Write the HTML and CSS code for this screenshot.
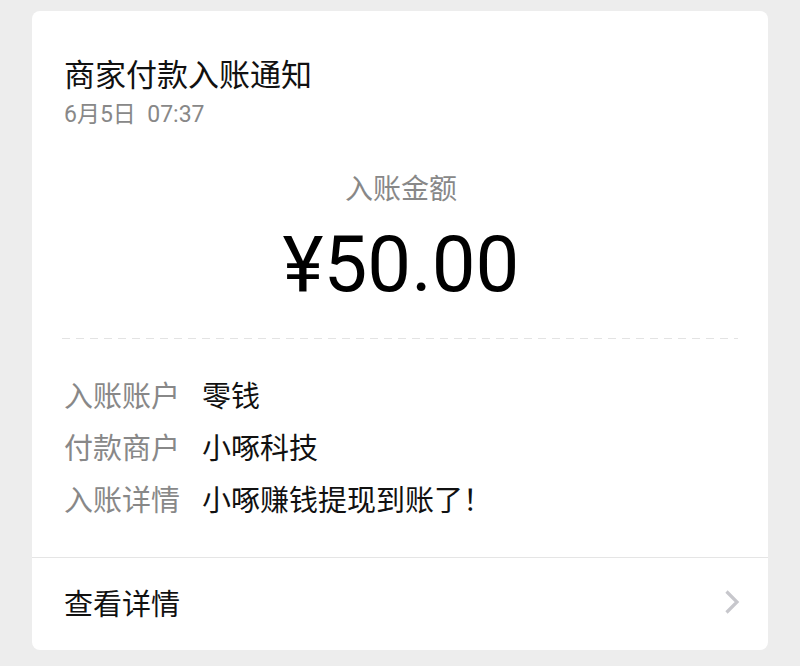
FILE: index.html
```html
<!DOCTYPE html>
<html lang="zh-CN">
<head>
<meta charset="utf-8">
<link rel="stylesheet" href="styles.css">
</head>
<body>
<div class="card">
  <div class="main">
    <div class="title">商家付款入账通知</div>
    <div class="date">6月5日&nbsp;&nbsp;07:37</div>
    <div class="amount-label">入账金额</div>
    <div class="amount">¥50.00</div>
    <div class="dash"></div>
    <div class="rows">
      <div class="row"><span class="label">入账账户</span><span class="value">零钱</span></div>
      <div class="row"><span class="label">付款商户</span><span class="value">小啄科技</span></div>
      <div class="row"><span class="label">入账详情</span><span class="value">小啄赚钱提现到账了！</span></div>
    </div>
  </div>
  <div class="footer">
    <span class="footer-text">查看详情</span>
    <svg class="chev" width="16" height="26" viewBox="0 0 16 26"><path d="M2.5 2.5 L13 13 L2.5 23.5" fill="none" stroke="#c7c7cc" stroke-width="3.2"/></svg>
  </div>
</div>
</body>
</html>
```

FILE: styles.css
```css
* { box-sizing: border-box; }
html, body { margin: 0; padding: 0; }
body {
  background: #ededed;
  padding: 11px 32px 0;
  font-family: "Roboto", "Noto Sans CJK SC", sans-serif;
  color: #111;
}
.card {
  background: #fff;
  border-radius: 8px;
  width: 736px;
  overflow: hidden;
}
.main {
  padding: 45px 30px 29px 32px;
}
.title {
  font-size: 31px;
  line-height: 40px;
  height: 40px;
  color: #111;
}
.date {
  font-size: 23px;
  line-height: 30px;
  margin-top: 4px;
  color: #888;
}
.amount-label {
  text-align: center;
  font-size: 28px;
  line-height: 40px;
  margin-top: 40px;
  color: #888;
}
.amount {
  text-align: center;
  font-size: 78px;
  line-height: 90px;
  margin-top: 10px;
  color: #000;
}
.dash {
  margin-top: 28px;
  height: 1px;
  background-image: linear-gradient(to right, #e3e3e3 0 8px, transparent 8px 14px);
  background-size: 14px 1px;
  margin-left: -2px;
}
.rows {
  margin-top: 32px;
}
.row {
  display: flex;
  font-size: 29px;
  line-height: 52px;
  height: 52px;
}
.label {
  width: 138px;
  color: #888;
}
.value {
  color: #111;
}
.footer {
  border-top: 1px solid #e5e5e5;
  margin-top: 1px;
  height: 93px;
  display: flex;
  align-items: center;
  justify-content: space-between;
  padding: 0 28px 4px 32px;
}
.footer-text {
  font-size: 29px;
  color: #111;
}
.chev { display: block; }
```
